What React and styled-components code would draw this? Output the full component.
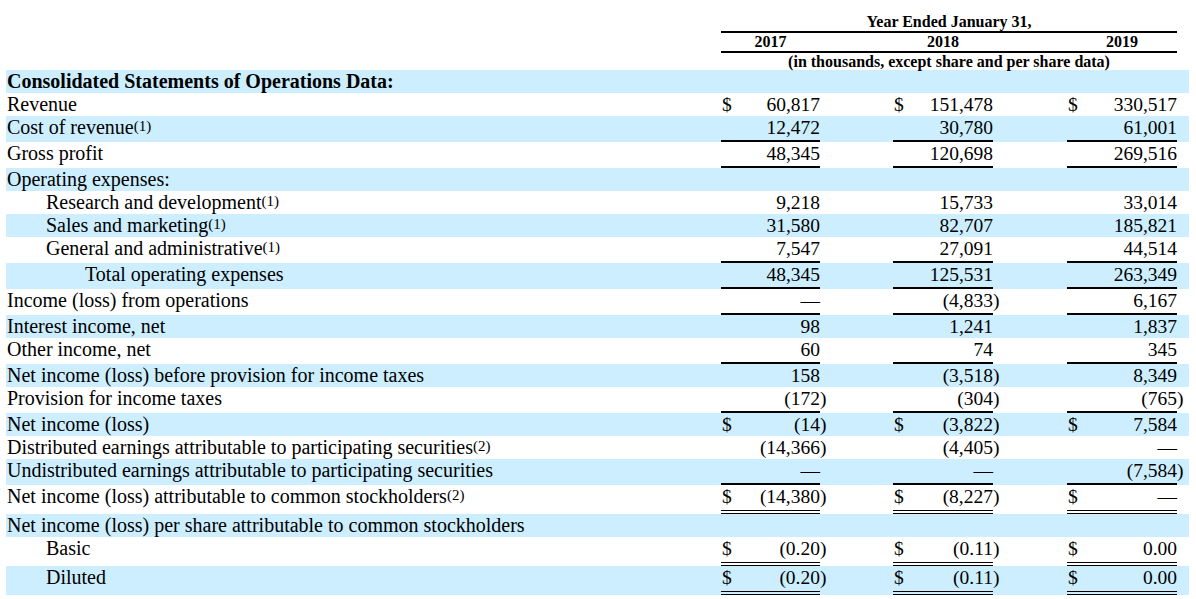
import React from "react";
import styled, { createGlobalStyle } from "styled-components";

const GlobalStyle = createGlobalStyle`
  body {
    margin: 0;
    background: #fff;
    color: #000;
    font-family: "Liberation Serif", "Times New Roman", serif;
  }
`;

const Page = styled.div`
  padding: 13px 0 0 6px;
`;

const Table = styled.table`
  table-layout: fixed;
  width: 1183px;
  border-collapse: separate;
  border-spacing: 0;
  font-size: 19.5px;
`;

const Col = styled.col`
  width: ${(p) => p.$w}px;
`;

const HeadCell = styled.td`
  padding: 0;
  font-size: 16px;
  font-weight: bold;
  line-height: ${(p) => p.$lh || 18}px;
  text-align: center;
  white-space: nowrap;
  border-bottom: ${(p) => (p.$rule ? "2px solid #000" : "none")};
`;

const Row = styled.tr`
  background: ${(p) => (p.$shade ? "#cceeff" : "transparent")};
`;

const Label = styled.td`
  padding: 0 0 0 ${(p) => 1 + (p.$indent || 0) * 39}px;
  font-size: 20px;
  line-height: 23px;
  vertical-align: top;
  white-space: nowrap;
  font-weight: ${(p) => (p.$bold ? "bold" : "normal")};
`;

const rules = {
  single: "padding-bottom: 1px; border-bottom: 2px solid #000;",
  double: "padding-bottom: 2px; border-bottom: 4px double #000;",
};

const Value = styled.td`
  padding: 0;
  line-height: 23px;
  vertical-align: top;
  ${(p) => (p.$rule ? rules[p.$rule] : "")}
`;

const Amount = styled.div`
  display: flex;
  justify-content: space-between;
  padding-left: 1px;
  white-space: nowrap;
`;

const Paren = styled.td`
  padding: 0;
  line-height: 23px;
  vertical-align: top;
`;

const Note = styled.sup`
  font-size: 15px;
  line-height: 0;
  vertical-align: 3px;
`;

const rows = [
  { label: "Consolidated Statements of Operations Data:", bold: true },
  { label: "Revenue", dollar: true, vals: ["60,817", "151,478", "330,517"] },
  { label: "Cost of revenue", note: 1, vals: ["12,472", "30,780", "61,001"], rule: "single" },
  { label: "Gross profit", vals: ["48,345", "120,698", "269,516"], rule: "single" },
  { label: "Operating expenses:" },
  { label: "Research and development", note: 1, indent: 1, vals: ["9,218", "15,733", "33,014"] },
  { label: "Sales and marketing", note: 1, indent: 1, vals: ["31,580", "82,707", "185,821"] },
  { label: "General and administrative", note: 1, indent: 1, vals: ["7,547", "27,091", "44,514"], rule: "single" },
  { label: "Total operating expenses", indent: 2, vals: ["48,345", "125,531", "263,349"], rule: "single" },
  { label: "Income (loss) from operations", vals: ["—", "(4,833)", "6,167"], rule: "single" },
  { label: "Interest income, net", vals: ["98", "1,241", "1,837"] },
  { label: "Other income, net", vals: ["60", "74", "345"], rule: "single" },
  { label: "Net income (loss) before provision for income taxes", vals: ["158", "(3,518)", "8,349"] },
  { label: "Provision for income taxes", vals: ["(172)", "(304)", "(765)"], rule: "single" },
  { label: "Net income (loss)", dollar: true, vals: ["(14)", "(3,822)", "7,584"] },
  { label: "Distributed earnings attributable to participating securities", note: 2, vals: ["(14,366)", "(4,405)", "—"] },
  { label: "Undistributed earnings attributable to participating securities", vals: ["—", "—", "(7,584)"], rule: "single" },
  { label: "Net income (loss) attributable to common stockholders", note: 2, dollar: true, vals: ["(14,380)", "(8,227)", "—"], rule: "double" },
  { label: "Net income (loss) per share attributable to common stockholders" },
  { label: "Basic", indent: 1, dollar: true, vals: ["(0.20)", "(0.11)", "0.00"], rule: "double" },
  { label: "Diluted", indent: 1, dollar: true, vals: ["(0.20)", "(0.11)", "0.00"], rule: "double" },
];

const widths = [715, 99, 73, 100, 74, 110, 12];

function Cells({ row }) {
  if (!row.vals) {
    return <td colSpan={6} />;
  }
  return row.vals.map((v, i) => {
    const neg = v.startsWith("(");
    return (
      <React.Fragment key={i}>
        <Value $rule={row.rule}>
          <Amount>
            <span>{row.dollar ? "$" : ""}</span>
            <span>{neg ? v.slice(0, -1) : v}</span>
          </Amount>
        </Value>
        <Paren>{neg ? ")" : ""}</Paren>
      </React.Fragment>
    );
  });
}

export default function App() {
  return (
    <Page>
      <GlobalStyle />
      <Table>
        <colgroup>
          {widths.map((w, i) => (
            <Col key={i} $w={w} />
          ))}
        </colgroup>
        <tbody>
          <tr>
            <td />
            <HeadCell colSpan={5} $rule>
              Year Ended January 31,
            </HeadCell>
            <td />
          </tr>
          <tr>
            <td />
            <HeadCell $rule>2017</HeadCell>
            <HeadCell $rule />
            <HeadCell $rule>2018</HeadCell>
            <HeadCell $rule />
            <HeadCell $rule>2019</HeadCell>
            <td />
          </tr>
          <tr>
            <td />
            <HeadCell colSpan={5} $lh={17}>
              (in thousands, except share and per share data)
            </HeadCell>
            <td />
          </tr>
          {rows.map((row, i) => (
            <Row key={i} $shade={i % 2 === 0}>
              <Label $indent={row.indent} $bold={row.bold}>
                {row.label}
                {row.note && <Note>({row.note})</Note>}
              </Label>
              <Cells row={row} />
            </Row>
          ))}
        </tbody>
      </Table>
    </Page>
  );
}
